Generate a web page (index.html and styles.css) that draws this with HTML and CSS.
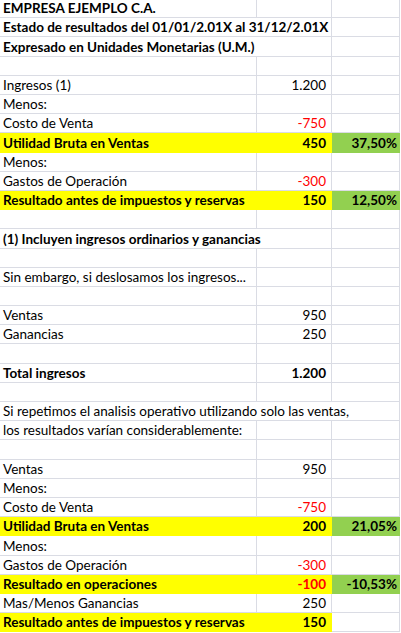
FILE: index.html
```html
<!DOCTYPE html>
<html lang="es">
<head>
<meta charset="utf-8">
<title>Estado de resultados</title>
<link rel="stylesheet" href="styles.css">
</head>
<body>
<div class="sheet">
  <div class="a b">EMPRESA EJEMPLO C.A.</div><div class="n"></div><div class="p"></div>
  <div class="a b s2">Estado de resultados del 01/01/2.01X al 31/12/2.01X</div><div class="p"></div>
  <div class="a b s2">Expresado en Unidades Monetarias (U.M.)</div><div class="p"></div>
  <div class="a"></div><div class="n"></div><div class="p"></div>
  <div class="a">Ingresos (1)</div><div class="n">1.200</div><div class="p"></div>
  <div class="a">Menos:</div><div class="n"></div><div class="p"></div>
  <div class="a">Costo de Venta</div><div class="n neg">-750</div><div class="p"></div>
  <div class="a b y">Utilidad Bruta en Ventas</div><div class="n b y">450</div><div class="p b g">37,50%</div>
  <div class="a">Menos:</div><div class="n"></div><div class="p"></div>
  <div class="a">Gastos de Operación</div><div class="n neg">-300</div><div class="p"></div>
  <div class="a b y">Resultado antes de impuestos y reservas</div><div class="n b y">150</div><div class="p b g">12,50%</div>
  <div class="a"></div><div class="n"></div><div class="p"></div>
  <div class="a b s2">(1) Incluyen ingresos ordinarios y ganancias</div><div class="p"></div>
  <div class="a"></div><div class="n"></div><div class="p"></div>
  <div class="a">Sin embargo, si deslosamos los ingresos...</div><div class="n"></div><div class="p"></div>
  <div class="a"></div><div class="n"></div><div class="p"></div>
  <div class="a">Ventas</div><div class="n">950</div><div class="p"></div>
  <div class="a">Ganancias</div><div class="n">250</div><div class="p"></div>
  <div class="a"></div><div class="n"></div><div class="p"></div>
  <div class="a b">Total ingresos</div><div class="n b">1.200</div><div class="p"></div>
  <div class="a"></div><div class="n"></div><div class="p"></div>
  <div class="a s3">Si repetimos el analisis operativo utilizando solo las ventas,</div>
  <div class="a">los resultados varían considerablemente:</div><div class="n"></div><div class="p"></div>
  <div class="a"></div><div class="n"></div><div class="p"></div>
  <div class="a">Ventas</div><div class="n">950</div><div class="p"></div>
  <div class="a">Menos:</div><div class="n"></div><div class="p"></div>
  <div class="a">Costo de Venta</div><div class="n neg">-750</div><div class="p"></div>
  <div class="a b y">Utilidad Bruta en Ventas</div><div class="n b y">200</div><div class="p b g">21,05%</div>
  <div class="a">Menos:</div><div class="n"></div><div class="p"></div>
  <div class="a">Gastos de Operación</div><div class="n neg">-300</div><div class="p"></div>
  <div class="a b y">Resultado en operaciones</div><div class="n b y neg">-100</div><div class="p b g">-10,53%</div>
  <div class="a">Mas/Menos Ganancias</div><div class="n">250</div><div class="p"></div>
  <div class="a b y">Resultado antes de impuestos y reservas</div><div class="n b y">150</div><div class="p"></div>
</div>
</body>
</html>
```
FILE: styles.css
```css
html, body {
  margin: 0;
  padding: 0;
  background: #ffffff;
  overflow: hidden;
}
.sheet {
  display: grid;
  grid-template-columns: 257px 75px 68px;
  grid-auto-rows: 19.2px;
  margin-top: -0.9px;
  font-family: Lato, "Liberation Sans", sans-serif;
  font-size: 13.5px;
  color: #000;
}
.sheet > div {
  box-sizing: border-box;
  border-right: 1px solid #dadce4;
  border-bottom: 1px solid #dadce4;
  white-space: nowrap;
  overflow: hidden;
  display: flex;
  align-items: flex-end;
  line-height: 15px;
  padding-bottom: 1px;
}
.a { padding-left: 3px; }
.n { justify-content: flex-end; padding-right: 5px; }
.p { justify-content: flex-end; padding-right: 2px; }
.s2 { grid-column: span 2; }
.s3 { grid-column: span 3; }
.b { font-weight: 700; }
.neg { color: #ff0000; }
.sheet > .y { background: #ffff00; border-color: #ffff00; }
.sheet > .g { background: #92d050; border-color: #92d050; }
```
